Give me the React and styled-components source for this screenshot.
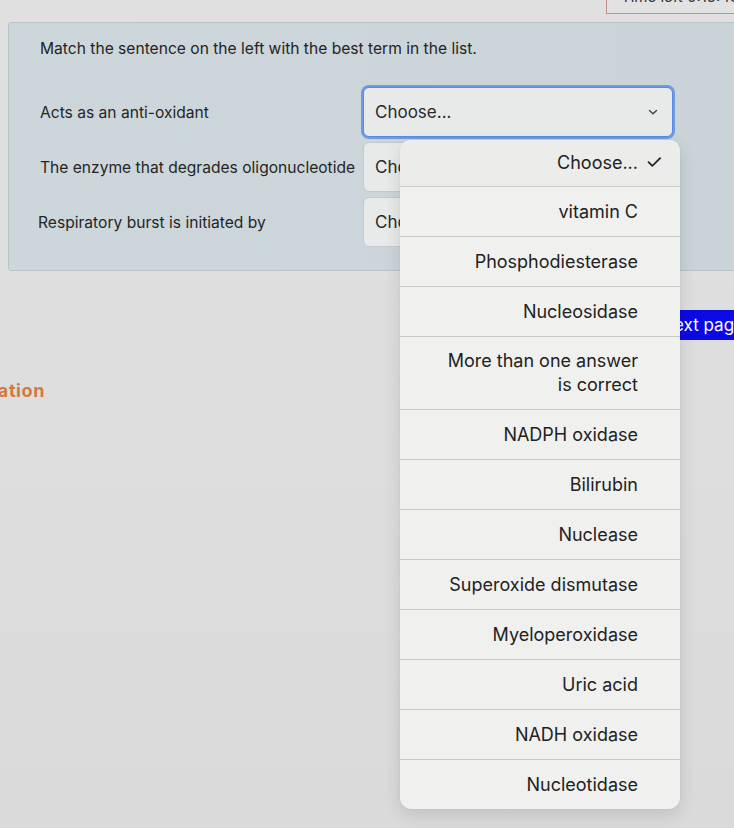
import React from 'react';
import styled, { createGlobalStyle } from 'styled-components';

const GlobalStyle = createGlobalStyle`
  html, body {
    margin: 0;
    padding: 0;
    background: #dcdddc;
  }
  body {
    font-family: Inter, "Noto Sans", sans-serif;
    color: #222;
  }
`;

const questions = [
  { text: 'Acts as an anti-oxidant', focused: true },
  { text: 'The enzyme that degrades oligonucleotide' },
  { text: 'Respiratory burst is initiated by', indent: 2 },
];

const options = [
  'Choose...',
  'vitamin C',
  'Phosphodiesterase',
  'Nucleosidase',
  'More than one answer is correct',
  'NADPH oxidase',
  'Bilirubin',
  'Nuclease',
  'Superoxide dismutase',
  'Myeloperoxidase',
  'Uric acid',
  'NADH oxidase',
  'Nucleotidase',
];

const Page = styled.div`
  position: relative;
  width: 734px;
  height: 828px;
  overflow: hidden;
  background: linear-gradient(180deg, #dfe0df 0%, #dcdddc 60%, #d9dad9 100%);
`;

const TopBar = styled.div`
  display: flex;
  justify-content: flex-end;
  height: 22px;
`;

const Timer = styled.div`
  margin-top: -22px;
  margin-right: -20px;
  width: 148px;
  height: 36px;
  border: 1px solid #c98b92;
  background: #e2e2e2;
  font-size: 15px;
  line-height: 36px;
  padding-left: 14px;
  color: #333;
  box-sizing: border-box;
`;

const Panel = styled.section`
  margin-left: 8px;
  width: 760px;
  box-sizing: border-box;
  background: linear-gradient(90deg, #cdd7db 0%, #ccd6da 50%, #c9d3d8 100%);
  border: 1px solid #b9c4c9;
  border-radius: 3px;
  padding: 16px 0 23px 31px;
`;

const Prompt = styled.p`
  margin: 0 0 28px;
  font-size: 15.6px;
  line-height: 20px;
  color: #242424;
`;

const Rows = styled.div`
  display: grid;
  gap: 5px;
`;

const Row = styled.div`
  display: grid;
  grid-template-columns: 323px 310px;
  align-items: center;
  height: 50px;
`;

const Label = styled.span`
  font-size: 15.6px;
  color: #252525;
  margin-left: ${(p) => (p.$indent ? -p.$indent : 0)}px;
`;

const Select = styled.div`
  height: 50px;
  box-sizing: border-box;
  display: flex;
  align-items: center;
  justify-content: space-between;
  padding: 0 12px 0 11px;
  background: #e8e9e9;
  border: 1px solid ${(p) => (p.$focused ? '#5a8be0' : '#c4c9cb')};
  box-shadow: ${(p) => (p.$focused ? '0 0 0 2px #6d9ae4' : 'none')};
  border-radius: 6px;
  font-size: 17px;
  color: #2a2a2a;
`;

const Chevron = styled.svg`
  width: 10px;
  height: 8px;
  margin-right: 2px;
`;

const Footer = styled.div`
  display: flex;
  justify-content: flex-end;
  margin-top: 39px;
`;

const NextButton = styled.button`
  margin-right: -34px;
  height: 30px;
  padding: 0 24px 0 13px;
  border: none;
  background: #0b0ae4;
  color: #fff;
  font-family: inherit;
  font-size: 17px;
  line-height: 30px;
`;

const NavHeading = styled.h3`
  display: flex;
  justify-content: flex-end;
  width: 45px;
  margin: 41px 0 0;
  white-space: nowrap;
  font-size: 18px;
  line-height: 20px;
  font-weight: 700;
  color: #d4793e;
  letter-spacing: 0.6px;
`;

const Menu = styled.ul`
  position: absolute;
  top: 140px;
  left: 400px;
  width: 280px;
  margin: 0;
  padding: 0;
  list-style: none;
  background: #efefee;
  border-radius: 10px 10px 12px 12px;
  box-shadow: 0 6px 18px rgba(0, 0, 0, 0.12), 0 0 1px rgba(0, 0, 0, 0.2);
  overflow: hidden;
`;

const Item = styled.li`
  display: flex;
  justify-content: flex-end;
  align-items: center;
  padding: ${(p) => (p.$first ? '10px' : '12px')} 10px ${(p) => (p.$first ? '11px' : '12px')} 16px;
  border-top: ${(p) => (p.$first ? 'none' : '1px solid #cacaca')};
  font-size: 18px;
  line-height: 25px;
  color: #222;
  background: ${(p) => (p.$first ? '#ececeb' : '#f0f0ef')};
`;

const ItemText = styled.span`
  max-width: 200px;
  text-align: right;
  line-height: ${(p) => (p.$wrap ? '24px' : '25px')};
`;

const Check = styled.span`
  width: 32px;
  flex: none;
  text-align: center;
  font-size: 20px;
  color: #1e1e1e;
`;

export default function App() {
  return (
    <Page>
      <GlobalStyle />
      <TopBar>
        <Timer>Time left 0:15:48</Timer>
      </TopBar>
      <Panel>
        <Prompt>Match the sentence on the left with the best term in the list.</Prompt>
        <Rows>
          {questions.map((q) => (
            <Row key={q.text}>
              <Label $indent={q.indent}>{q.text}</Label>
              <Select $focused={q.focused}>
                <span>Choose...</span>
                <Chevron viewBox="0 0 10 8">
                  <path d="M1.5 2.5 L5 5.8 L8.5 2.5" fill="none" stroke="#444" strokeWidth="1.4" strokeLinecap="round" />
                </Chevron>
              </Select>
            </Row>
          ))}
        </Rows>
      </Panel>
      <Footer>
        <NextButton>Next page</NextButton>
      </Footer>
      <NavHeading>Quiz navigation</NavHeading>
      <Menu>
        {options.map((o, i) => (
          <Item key={o} $first={i === 0}>
            <ItemText $wrap={o.length > 24}>{o}</ItemText>
            <Check>{i === 0 ? '✓' : ''}</Check>
          </Item>
        ))}
      </Menu>
    </Page>
  );
}
